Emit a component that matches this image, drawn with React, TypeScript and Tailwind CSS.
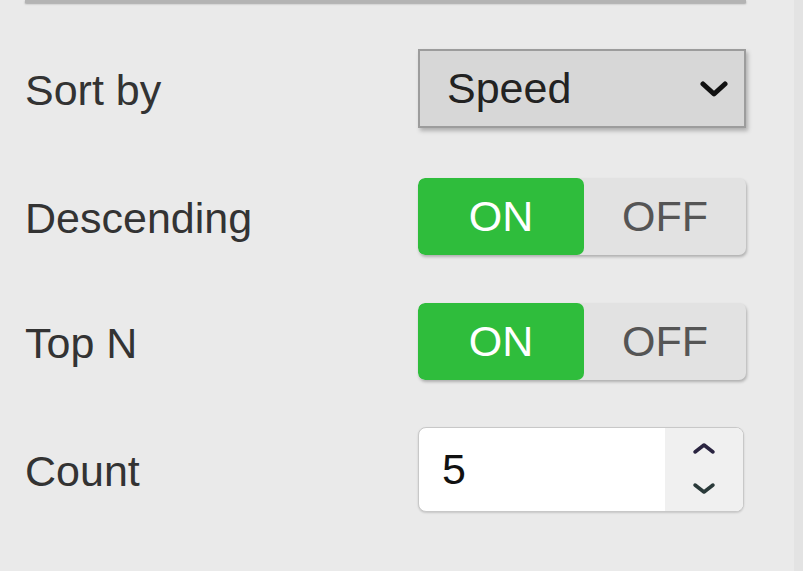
import { useState } from "react";

type ToggleProps = {
  value: boolean;
  onChange: (value: boolean) => void;
};

function Toggle({ value, onChange }: ToggleProps) {
  return (
    <div className="flex h-[77px] w-[328px] overflow-hidden rounded-[7px] bg-[#e2e2e2] shadow-[1px_2px_3px_rgba(0,0,0,0.25)]">
      <button
        type="button"
        onClick={() => onChange(true)}
        className={`flex w-[166px] items-center justify-center rounded-[7px] ${
          value ? "bg-[#2fbd3c] text-white" : "text-[#555]"
        }`}
      >
        ON
      </button>
      <button
        type="button"
        onClick={() => onChange(false)}
        className={`flex flex-1 items-center justify-center rounded-[7px] ${
          value ? "text-[#555]" : "bg-[#2fbd3c] text-white"
        }`}
      >
        OFF
      </button>
    </div>
  );
}

function Row({ label, children, className }: { label: string; children: React.ReactNode; className?: string }) {
  return (
    <div className={`flex items-center justify-between ${className ?? ""}`}>
      <span className="mt-[4px] text-[#333]">{label}</span>
      {children}
    </div>
  );
}

export default function App() {
  const [descending, setDescending] = useState(true);
  const [topN, setTopN] = useState(true);
  const [count, setCount] = useState(5);

  return (
    <div
      className="h-[571px] w-[803px] overflow-hidden bg-[#eaeaea] text-[43px] leading-none"
      style={{ fontFamily: '"Liberation Sans", Arial, sans-serif' }}
    >
      <div className="flex h-full">
        <div className="flex-1 pl-[25px] pr-[48px]">
          <div className="h-[3px] bg-[#b4b4b4] shadow-[0_1px_2px_rgba(0,0,0,0.3)]" />

          <Row label="Sort by" className="mt-[46px]">
            <div className="flex h-[79px] w-[328px] items-center justify-between border-2 border-[#9c9c9c] bg-[#d7d7d7] pl-[27px] pr-[16px] text-[#222] shadow-[2px_3px_4px_rgba(0,0,0,0.25)]">
              <span>Speed</span>
              <svg width="28" height="20" viewBox="0 0 28 20" fill="none">
                <path d="M3 5l11 10 11-10" stroke="#111" strokeWidth="5" strokeLinecap="round" strokeLinejoin="round" />
              </svg>
            </div>
          </Row>

          <Row label="Descending" className="mt-[50px]">
            <Toggle value={descending} onChange={setDescending} />
          </Row>

          <Row label="Top N" className="mt-[48px]">
            <Toggle value={topN} onChange={setTopN} />
          </Row>

          <Row label="Count" className="mt-[47px]">
            <div className="mr-[2px] flex h-[85px] w-[326px] overflow-hidden rounded-[8px] border border-[#c8c8c8] bg-white shadow-[0_1px_2px_rgba(0,0,0,0.15)]">
              <div className="flex flex-1 items-center pl-[23px] text-[#111]">{count}</div>
              <div className="flex w-[78px] flex-col items-center justify-between bg-[#f0f0f0] pt-[10px] pb-[12px]">
                <button type="button" onClick={() => setCount(count + 1)} className="flex h-[20px] items-center">
                  <svg width="26" height="14" viewBox="0 0 26 14" fill="none">
                    <path d="M4 11l9-7 9 7" stroke="#2a2440" strokeWidth="3.5" strokeLinecap="round" strokeLinejoin="round" />
                  </svg>
                </button>
                <button type="button" onClick={() => setCount(Math.max(0, count - 1))} className="flex h-[20px] items-center">
                  <svg width="26" height="14" viewBox="0 0 26 14" fill="none">
                    <path d="M4 3l9 7 9-7" stroke="#2a3a3a" strokeWidth="3.5" strokeLinecap="round" strokeLinejoin="round" />
                  </svg>
                </button>
              </div>
            </div>
          </Row>
        </div>
        <div className="w-[9px] bg-[#e3e3e3]" />
      </div>
    </div>
  );
}
